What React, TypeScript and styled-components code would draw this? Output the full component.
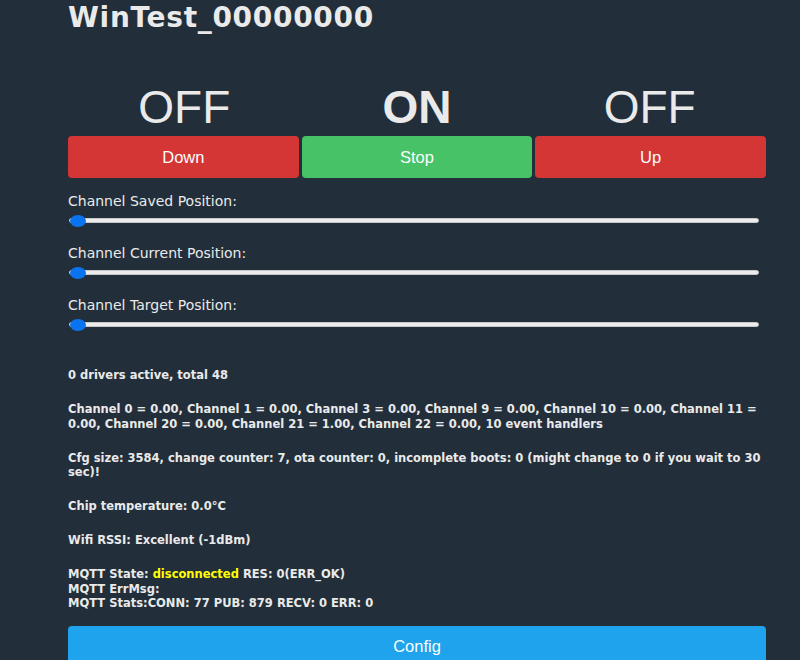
import React from 'react';
import styled, { createGlobalStyle } from 'styled-components';

const GlobalStyle = createGlobalStyle`
  html, body {
    margin: 0;
    padding: 0;
    background-color: #222f3b;
    color: #eaeaea;
    overflow: hidden;
  }
`;

const Page = styled.div`
  width: 698px;
  padding: 1px 0 0 68px;
`;

const Title = styled.h3`
  margin: 0;
  font-family: 'DejaVu Sans', Verdana, sans-serif;
  font-size: 28px;
  font-weight: bold;
  letter-spacing: 0.7px;
  line-height: 33px;
  color: #eaeaea;
`;

const StateRow = styled.div`
  display: grid;
  grid-template-columns: repeat(3, 1fr);
  margin-top: 46px;
`;

interface StateProps {
  on?: boolean;
}

const StateText = styled.div<StateProps>`
  text-align: center;
  font-family: 'Liberation Sans', Arial, sans-serif;
  font-size: 46px;
  line-height: 55px;
  font-weight: ${props => (props.on ? 'bold' : 'normal')};
  color: #eaeaea;
`;

const ButtonRow = styled.div`
  display: grid;
  grid-template-columns: repeat(3, 1fr);
  gap: 3px;
  margin-top: 1px;
`;

interface ButtonProps {
  tone: 'red' | 'green' | 'blue';
}

const tones = {
  red: '#d43535',
  green: '#47c266',
  blue: '#1fa3ec',
};

const Button = styled.button<ButtonProps>`
  height: 42px;
  border: 0;
  border-radius: 4px;
  background-color: ${props => tones[props.tone]};
  color: #faffff;
  font-family: 'Liberation Sans', Arial, sans-serif;
  font-size: 16.5px;
  cursor: pointer;
  padding: 0;
`;

const Sliders = styled.div`
  margin-top: 15px;
`;

const SliderGroup = styled.div`
  margin-bottom: 17px;
`;

const SliderLabel = styled.div`
  font-family: 'DejaVu Sans', Verdana, sans-serif;
  font-size: 14px;
  line-height: 16px;
  color: #eaeaea;
`;

const Range = styled.input`
  -webkit-appearance: none;
  appearance: none;
  display: block;
  width: 690px;
  height: 16px;
  margin: 3px 0 0 1px;
  background: transparent;

  &::-webkit-slider-runnable-track {
    height: 5px;
    background: #ececec;
    border: 1px solid #c8c8c8;
    border-radius: 3px;
    box-sizing: border-box;
  }

  &::-webkit-slider-thumb {
    -webkit-appearance: none;
    width: 16px;
    height: 12px;
    margin-top: -4px;
    border-radius: 50%;
    background: #0a74f0;
    border: 0;
  }
`;

const Status = styled.div`
  margin-top: 36px;
  font-family: 'DejaVu Sans', Verdana, sans-serif;
  font-size: 11.5px;
  font-weight: bold;
  line-height: 14.5px;
  color: #eaeaea;
`;

const Para = styled.p`
  margin: 0 0 19.5px;

  &:last-child {
    margin-bottom: 15px;
  }
`;

const Highlight = styled.span`
  color: #ffff00;
`;

const ConfigButton = styled(Button)`
  display: block;
  width: 100%;
`;

const sliders = ['Channel Saved Position:', 'Channel Current Position:', 'Channel Target Position:'];

const App: React.FC = () => {
  return (
    <>
      <GlobalStyle />
      <Page>
        <Title>WinTest_00000000</Title>

        <StateRow>
          <StateText>OFF</StateText>
          <StateText on>ON</StateText>
          <StateText>OFF</StateText>
        </StateRow>

        <ButtonRow>
          <Button tone="red">Down</Button>
          <Button tone="green">Stop</Button>
          <Button tone="red">Up</Button>
        </ButtonRow>

        <Sliders>
          {sliders.map(label => (
            <SliderGroup key={label}>
              <SliderLabel>{label}</SliderLabel>
              <Range type="range" min={0} max={100} defaultValue={0} />
            </SliderGroup>
          ))}
        </Sliders>

        <Status>
          <Para>0 drivers active, total 48</Para>
          <Para>
            Channel 0 = 0.00, Channel 1 = 0.00, Channel 3 = 0.00, Channel 9 = 0.00, Channel 10 = 0.00,
            Channel 11 = 0.00, Channel 20 = 0.00, Channel 21 = 1.00, Channel 22 = 0.00, 10 event handlers
          </Para>
          <Para>
            Cfg size: 3584, change counter: 7, ota counter: 0, incomplete boots: 0 (might change to 0 if you
            wait to 30 sec)!
          </Para>
          <Para>Chip temperature: 0.0°C</Para>
          <Para>Wifi RSSI: Excellent (-1dBm)</Para>
          <Para>
            MQTT State: <Highlight>disconnected</Highlight> RES: 0(ERR_OK)
            <br />
            MQTT ErrMsg:
            <br />
            MQTT Stats:CONN: 77 PUB: 879 RECV: 0 ERR: 0
          </Para>
        </Status>

        <ConfigButton tone="blue">Config</ConfigButton>
      </Page>
    </>
  );
};

export default App;
